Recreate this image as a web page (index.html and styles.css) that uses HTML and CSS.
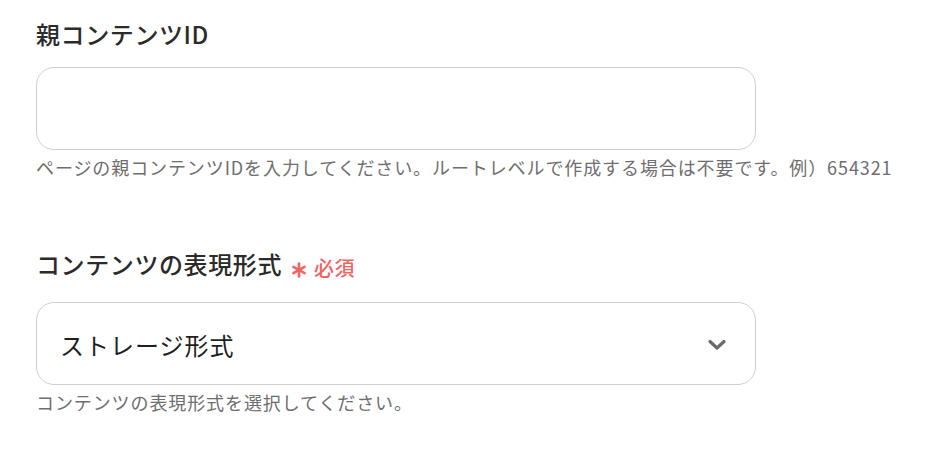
FILE: index.html
```html
<!DOCTYPE html>
<html lang="ja">
<head>
    <meta charset="UTF-8">
    <title>ページ作成</title>
    <link rel="stylesheet" href="styles.css">
</head>
<body>
    <!-- 親コンテンツID -->
    <div class="field">
        <label class="field-label">親コンテンツID</label>
        <input type="text" class="field-input">
        <p class="field-help">ページの親コンテンツIDを入力してください。ルートレベルで作成する場合は不要です。例）654321</p>
    </div>

    <!-- 表現形式 -->
    <div class="field">
        <label class="field-label">コンテンツの表現形式<span class="required"><svg class="required-mark" width="16" height="16" viewBox="0 0 16 16">
            <g stroke="#f26363" stroke-width="2.6" stroke-linecap="round">
                <line x1="8" y1="1.5" x2="8" y2="14.5"/>
                <line x1="2.4" y1="4.8" x2="13.6" y2="11.2"/>
                <line x1="2.4" y1="11.2" x2="13.6" y2="4.8"/>
            </g>
        </svg>必須</span></label>
        <div class="field-select">
            <span class="select-value">ストレージ形式</span>
            <svg class="select-arrow" width="20" height="12" viewBox="0 0 20 12">
                <path d="M3 2.5 L10 9 L17 2.5" fill="none" stroke="#6b6b6b" stroke-width="3.2" stroke-linecap="round" stroke-linejoin="round"/>
            </svg>
        </div>
        <p class="field-help">コンテンツの表現形式を選択してください。</p>
    </div>
</body>
</html>
```

FILE: styles.css
```css
body {
    margin: 0;
    padding: 16px 36px 0;
    background: #ffffff;
    font-family: "Noto Sans CJK JP", "Noto Sans", sans-serif;
    color: #333333;
}

.field {
    width: 720px;
}

.field + .field {
    margin-top: 66px;
}

.field-label {
    display: flex;
    align-items: baseline;
    font-size: 24px;
    line-height: 36px;
    font-weight: 500;
    letter-spacing: 0.6px;
    color: #2b2b2b;
}

.required {
    display: flex;
    align-items: center;
    align-self: center;
    margin-left: 9px;
    margin-top: 4px;
    font-size: 20px;
    font-weight: 500;
    letter-spacing: 0.5px;
    color: #f26363;
}

.required-mark {
    margin-right: 7px;
    margin-top: 3px;
}

.field-input,
.field-select {
    box-sizing: border-box;
    width: 720px;
    height: 83px;
    margin-top: 15px;
    border: 1px solid #cfcfd3;
    border-radius: 18px;
    background: #ffffff;
}

.field-input {
    display: block;
    padding: 0 22px;
    font: inherit;
    outline: none;
}

.field-select {
    display: flex;
    align-items: center;
    justify-content: space-between;
    margin-top: 16px;
    padding: 2px 26px 0 23px;
}

.select-value {
    font-size: 24px;
    letter-spacing: 1px;
    color: #1f1f1f;
}

.select-arrow {
    margin-right: 2px;
}

.field-help {
    margin: 4px 0 0;
    font-size: 18px;
    line-height: 26px;
    letter-spacing: 0.9px;
    color: #6e6e6e;
    white-space: nowrap;
}
```
